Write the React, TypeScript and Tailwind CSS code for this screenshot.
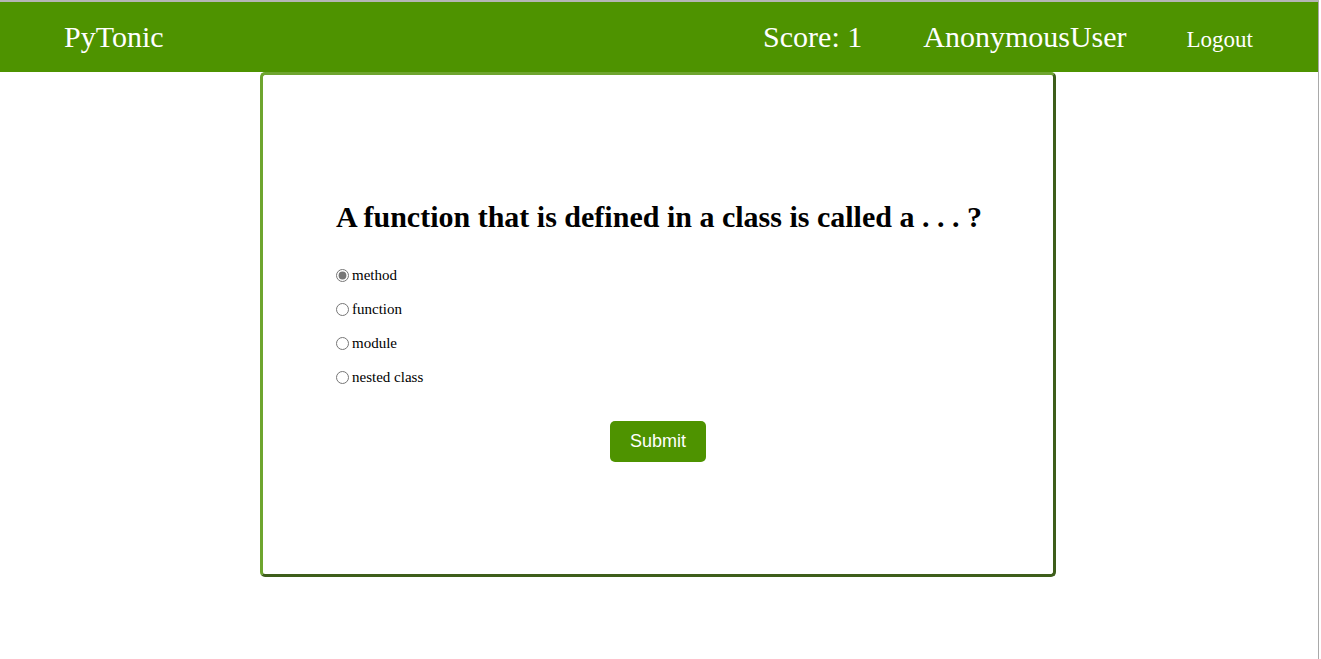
import { useState } from "react";

const options = ["method", "function", "module", "nested class"];

const App = () => {
  const [answer, setAnswer] = useState("method");
  return (
    <div className="w-[1321px] h-[659px] bg-white flex overflow-hidden font-['Liberation_Serif',serif]">
      <div className="w-[1319px] h-full border-r border-[#a9a9a9] border-t-2 border-t-[#b5b5b5]">
        <nav className="h-[70px] bg-[#4e9300] flex items-center text-white pl-[64px] pr-[65px]">
          <span className="text-[30px] leading-none">PyTonic</span>
          <div className="ml-auto flex items-center">
            <span className="text-[30px] leading-none">Score: 1</span>
            <span className="text-[30px] leading-none ml-[61px]">AnonymousUser</span>
            <span className="text-[23px] leading-none ml-[60px] mt-[4px]">Logout</span>
          </div>
        </nav>
        <div className="flex justify-center">
          <div className="w-[796px] h-[505px] ml-[-2px] rounded-[5px] border-[3px] border-t-[#6ea52f] border-l-[#6ea52f] border-r-[#3e5e1b] border-b-[#3e5e1b] pl-[73px] pt-[127px]">
            <h1 className="text-[30px] font-bold text-black leading-none">
              A function that is defined in a class is called a . . . ?
            </h1>
            <form className="mt-[26px]" onSubmit={(e) => e.preventDefault()}>
              {options.map((o) => (
                <label key={o} className="flex items-center h-[34px] text-[15px] text-black">
                  <input
                    type="radio"
                    name="answer"
                    checked={answer === o}
                    onChange={() => setAnswer(o)}
                    className="w-[13px] h-[13px] m-0 mr-[3px] accent-[#767676]"
                  />
                  {o}
                </label>
              ))}
              <div className="flex justify-center pr-[73px] mt-[27px]">
                <button
                  type="submit"
                  className="w-[96px] h-[41px] rounded-[5px] bg-[#4e9300] text-white text-[18px] font-['Liberation_Sans',sans-serif]"
                >
                  Submit
                </button>
              </div>
            </form>
          </div>
        </div>
      </div>
    </div>
  );
};

export default App;
